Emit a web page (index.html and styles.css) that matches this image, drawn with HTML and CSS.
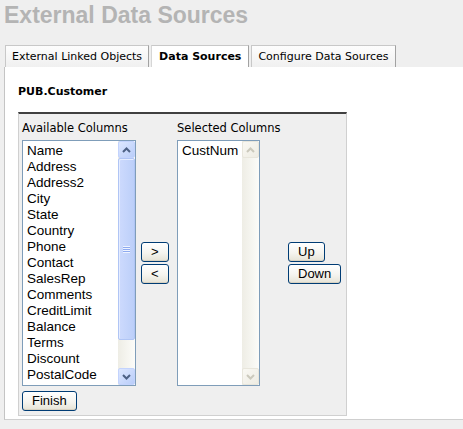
FILE: index.html
```html
<!DOCTYPE html>
<html>
<head>
<meta charset="utf-8">
<link rel="stylesheet" href="styles.css">
</head>
<body>
<h1 class="title">External Data Sources</h1>
<div class="tabs">
  <div class="tab">External Linked Objects</div>
  <div class="tab active">Data Sources</div>
  <div class="tab">Configure Data Sources</div>
</div>
<div class="panel">
  <div class="table-name">PUB.Customer</div>
  <div class="colbox">
    <div class="label">Available Columns</div>
    <div></div>
    <div class="label">Selected Columns</div>
    <div></div>

    <div class="listbox avail">
      <ul class="items">
        <li>Name</li><li>Address</li><li>Address2</li><li>City</li><li>State</li>
        <li>Country</li><li>Phone</li><li>Contact</li><li>SalesRep</li><li>Comments</li>
        <li>CreditLimit</li><li>Balance</li><li>Terms</li><li>Discount</li><li>PostalCode</li>
      </ul>
      <div class="sb">
        <div class="sb-btn"><svg width="9" height="6" viewBox="0 0 9 6"><polyline points="1,5 4.5,1.5 8,5" fill="none" stroke="#4d6185" stroke-width="2"/></svg></div>
        <div class="sb-thumb"><div class="grip"></div></div>
        <div class="sb-track"></div>
        <div class="sb-btn"><svg width="9" height="6" viewBox="0 0 9 6"><polyline points="1,1 4.5,4.5 8,1" fill="none" stroke="#4d6185" stroke-width="2"/></svg></div>
      </div>
    </div>

    <div class="move">
      <button class="btn">&gt;</button>
      <button class="btn">&lt;</button>
    </div>

    <div class="listbox selected">
      <ul class="items">
        <li>CustNum</li>
      </ul>
      <div class="sb disabled">
        <div class="sb-btn"><svg width="9" height="6" viewBox="0 0 9 6"><polyline points="1,5 4.5,1.5 8,5" fill="none" stroke="#cbc9bc" stroke-width="2"/></svg></div>
        <div class="sb-track grow"></div>
        <div class="sb-btn"><svg width="9" height="6" viewBox="0 0 9 6"><polyline points="1,1 4.5,4.5 8,1" fill="none" stroke="#cbc9bc" stroke-width="2"/></svg></div>
      </div>
    </div>

    <div class="order">
      <button class="btn">Up</button>
      <button class="btn">Down</button>
    </div>

    <div class="finish-cell"><button class="btn">Finish</button></div>
  </div>
</div>
</body>
</html>
```

FILE: styles.css
```css
html, body {
  margin: 0;
  padding: 0;
  background: #efefef;
}

.title {
  margin: 0;
  padding: 3px 0 0 4px;
  font: bold 23px/25px "Liberation Sans", Arial, sans-serif;
  color: #b4b4b4;
}

.tabs {
  display: flex;
  gap: 2px;
  margin: 17px 0 0 5px;
}

.tab {
  font: 11px/14px "DejaVu Sans", Verdana, sans-serif;
  color: #000;
  padding: 4px 6px 3px;
  border: 1px solid #c8c8c8;
  border-right-color: #a2a2a2;
  border-bottom: none;
  background: linear-gradient(#fdfdfd, #f0f0f0);
  white-space: nowrap;
}

.tab.active {
  background: #fff;
  font-weight: bold;
  padding: 4px 7px 3px;
  border-left-color: #d6d6d6;
}

.panel {
  margin-left: 4px;
  background: #fff;
  border-left: 1px solid #c4c4c4;
  border-bottom: 1px solid #cfcfcf;
  padding: 18px 0 3px 13px;
}

.table-name {
  font: bold 11px/14px "DejaVu Sans", Verdana, sans-serif;
  color: #000;
  margin: 0 0 13px 0;
}

.colbox {
  box-sizing: border-box;
  width: 329px;
  background: #efefef;
  border: 1px solid #d0d0d0;
  border-top: 2px solid #404040;
  padding: 7px 0 4px 3px;
  display: grid;
  grid-template-columns: 119px 36px 111px auto;
  grid-template-rows: 14px 246px 20px;
  row-gap: 5px;
}

.label {
  font: 11.5px/14px "DejaVu Sans", Tahoma, sans-serif;
  color: #000;
  white-space: nowrap;
}

.listbox {
  box-sizing: border-box;
  height: 246px;
  border: 1px solid #7f9db9;
  background: #fff;
  display: flex;
}

.listbox.avail { width: 114px; }
.listbox.selected { width: 83px; }

.items {
  flex: 1;
  margin: 0;
  padding: 2px 0 0 4px;
  list-style: none;
  overflow: hidden;
  font: 13.5px/16px "Liberation Sans", Arial, sans-serif;
  color: #000;
}

.sb {
  width: 17px;
  display: flex;
  flex-direction: column;
  background: linear-gradient(90deg, #eeede5, #fcfcf9);
}

.sb-btn {
  box-sizing: border-box;
  height: 17px;
  border: 1px solid #c3d3fd;
  border-radius: 2px;
  background: linear-gradient(135deg, #dde7ff, #b9cdf9);
  display: flex;
  align-items: center;
  justify-content: center;
}

.sb-thumb {
  box-sizing: border-box;
  height: 182px;
  border: 1px solid #b0c5f5;
  border-radius: 2px;
  background: linear-gradient(90deg, #cddafd, #bccff9);
  box-shadow: inset 1px 1px 0 #e4ecff;
  display: flex;
  align-items: center;
  justify-content: center;
}

.grip {
  width: 7px;
  height: 7px;
  background: repeating-linear-gradient(#eef3ff 0, #eef3ff 1px, #8eaaf0 1px, #8eaaf0 2px);
}

.sb-track {
  flex: 1;
}

.sb.disabled .sb-btn {
  border-color: #e8e6dc;
  background: linear-gradient(135deg, #f9f8f3, #eeece3);
}

.move {
  align-self: center;
  display: flex;
  flex-direction: column;
  gap: 2px;
  align-items: flex-start;
}

.order {
  align-self: center;
  display: flex;
  flex-direction: column;
  gap: 2px;
  align-items: flex-start;
}

.finish-cell {
  grid-column: 1;
}

.btn {
  box-sizing: border-box;
  height: 20px;
  margin: 0;
  padding: 0 9px;
  font: 13px/18px "Liberation Sans", Arial, sans-serif;
  color: #000;
  border: 1px solid #003c74;
  border-radius: 3px;
  background: linear-gradient(#ffffff 0%, #f5f4ef 55%, #e6e3d6 100%);
  box-shadow: inset 0 -1px 0 #d8d2c2;
}
```
